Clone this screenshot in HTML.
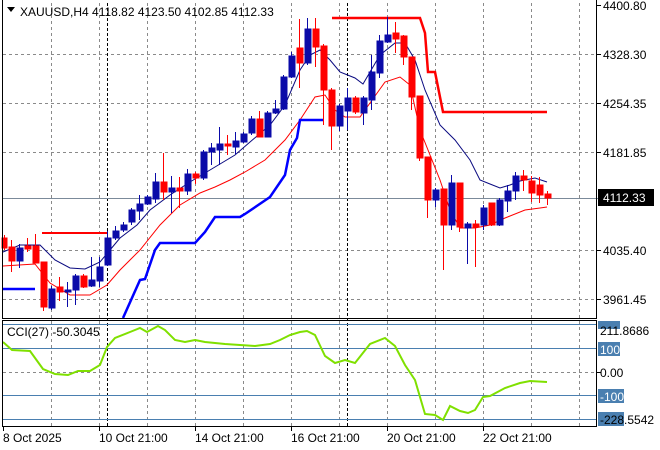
<!DOCTYPE html>
<html><head><meta charset="utf-8"><style>
html,body{margin:0;padding:0;background:#fff;width:660px;height:450px;overflow:hidden}
svg{display:block}
text{font-family:"Liberation Sans",sans-serif;font-size:12px;fill:#000}
</style></head><body>
<svg width="660" height="450" viewBox="0 0 660 450">
<rect width="660" height="450" fill="#fff"/>
<g stroke="#8a8a8a" stroke-width="1" stroke-dasharray="3,3" fill="none">
<path d="M3 54.5H596M3 103.5H596M3 152.5H596M3 250.5H596M3 299.5H596M3 372.5H596"/>
<path d="M51.5 3V426M99.5 3V426M147.5 3V426M195.5 3V426M243.5 3V426M291.5 3V426M339.5 3V426M387.5 3V426M435.5 3V426M483.5 3V426M531.5 3V426M579.5 3V426"/>
</g>
<path d="M107.5 3V426M347.5 3V426" stroke="#000" stroke-dasharray="3,2"/>
<path d="M3 198.5H598" stroke="#7b8a9a"/>
<g stroke="#4a7fb0"><path d="M3 324.5H596M3 348.5H596M3 395.5H596M3 419.5H596"/></g>
<polyline fill="none" stroke="#0a0a80" stroke-width="1" points="3,252 20,245 40,245 55,260 70,268 85,269 100,262 110,250 120,238 137,225 150,210 170,195 190,182 210,170 235,155 250,142 270,125 285,105 300,70 310,55 320,50 330,60 340,72 355,78 363,84 380,55 395,43 405,43 415,60 425,90 440,125 455,140 470,160 480,180 490,184 500,188 510,185 520,181 535,178 547,182"/>
<polyline fill="none" stroke="#ff0000" stroke-width="1" points="3,266 35,264 50,283 70,295 90,295 107,285 120,270 140,250 160,225 180,205 200,193 215,187 230,180 245,172 265,160 285,140 300,120 315,97 325,95 335,110 345,117 360,117 370,103 385,82 400,77 410,85 420,130 430,155 440,180 450,210 460,228 475,228 490,225 505,218 525,210 540,208 547,207"/>
<polyline fill="none" stroke="#0000ff" stroke-width="2.5" points="3,289 35,289"/>
<polyline fill="none" stroke="#0000ff" stroke-width="2.5" points="123,318 140,280 145,279 155,250 160,243 195,243 205,232 215,217 240,217 245,214 270,197 285,175 290,150 297,138 300,120 323,120"/>
<polyline fill="none" stroke="#ff0000" stroke-width="2" points="42,233 107,233"/>
<polyline fill="none" stroke="#ff0000" stroke-width="2.5" points="332,18 420,18 425,33 428,72 435,72 443,112 547,112"/>
<g stroke-width="1">
<g stroke="#ff0000" fill="#ff0000">
<path d="M4.5 235V250M11.5 240V272M27.5 238V252M35.5 234V263M43.5 262V311M59.5 277V301M83.5 274V288M163.5 153V200M179.5 177V208M195.5 172V184M227.5 135V155M259.5 111V137M299.5 19V88M315.5 18V67M323.5 44V125M331.5 88V150M355.5 96V114M395.5 22V53M403.5 35V65M411.5 57V110M419.5 96V161M427.5 157V218M443.5 189V270M459.5 183V232M475.5 220V267M491.5 203V226M523.5 170V191M531.5 176V202M539.5 177V203M547.5 191V205"/>
<rect x="2" y="238" width="5" height="10"/><rect x="9" y="247" width="6" height="14"/><rect x="25" y="246" width="6" height="3"/><rect x="33" y="246" width="6" height="17"/><rect x="41" y="262" width="6" height="45"/><rect x="57" y="287" width="6" height="5"/><rect x="81" y="276" width="6" height="11"/><rect x="161" y="182" width="6" height="10"/><rect x="177" y="188" width="6" height="3"/><rect x="193" y="174" width="6" height="4"/><rect x="225" y="144" width="6" height="2"/><rect x="257" y="119" width="6" height="18"/><rect x="297" y="48" width="6" height="15"/><rect x="313" y="29" width="6" height="18"/><rect x="321" y="46" width="6" height="44"/><rect x="329" y="90" width="6" height="36"/><rect x="353" y="98" width="6" height="14"/><rect x="393" y="33" width="6" height="6"/><rect x="401" y="36" width="6" height="21"/><rect x="409" y="57" width="6" height="40"/><rect x="417" y="96" width="6" height="62"/><rect x="425" y="157" width="6" height="43"/><rect x="441" y="189" width="6" height="36"/><rect x="457" y="183" width="6" height="44"/><rect x="473" y="224" width="6" height="3"/><rect x="489" y="203" width="6" height="22"/><rect x="521" y="176" width="6" height="4"/><rect x="529" y="181" width="6" height="12"/><rect x="537" y="185" width="6" height="10"/><rect x="545" y="194" width="6" height="4"/>
</g>
<g stroke="#0a0aa8" fill="#0a0aa8">
<path d="M19.5 244V268M51.5 286V310M67.5 282V307M75.5 274V305M91.5 257V287M99.5 257V287M107.5 231V266M115.5 226V240M123.5 222V232M131.5 208V225M139.5 195V220M147.5 195V205M155.5 173V203M171.5 176V213M187.5 169V195M203.5 150V180M211.5 143V165M219.5 127V165M235.5 132V154M243.5 132V143M251.5 116V135M267.5 111V137M275.5 100V114M283.5 75V110M291.5 52V78M307.5 18V65M339.5 104V131M347.5 88V130M363.5 96V125M371.5 55V110M379.5 35V78M387.5 17V43M435.5 188V207M451.5 175V230M467.5 222V264M483.5 205V230M499.5 198V226M507.5 185V212M515.5 172V200"/>
<rect x="17" y="248" width="6" height="13"/><rect x="49" y="289" width="6" height="19"/><rect x="65" y="290" width="6" height="2"/><rect x="73" y="276" width="6" height="14"/><rect x="89" y="280" width="6" height="6"/><rect x="97" y="267" width="6" height="14"/><rect x="105" y="238" width="6" height="27"/><rect x="113" y="231" width="6" height="7"/><rect x="121" y="225" width="6" height="5"/><rect x="129" y="210" width="6" height="12"/><rect x="137" y="204" width="6" height="7"/><rect x="145" y="197" width="6" height="7"/><rect x="153" y="182" width="6" height="17"/><rect x="169" y="188" width="6" height="4"/><rect x="185" y="174" width="6" height="17"/><rect x="201" y="152" width="6" height="26"/><rect x="209" y="148" width="6" height="4"/><rect x="217" y="144" width="6" height="6"/><rect x="233" y="141" width="6" height="6"/><rect x="241" y="134" width="6" height="8"/><rect x="249" y="119" width="6" height="14"/><rect x="265" y="113" width="6" height="24"/><rect x="273" y="109" width="6" height="4"/><rect x="281" y="77" width="6" height="32"/><rect x="289" y="56" width="6" height="21"/><rect x="305" y="29" width="6" height="34"/><rect x="337" y="106" width="6" height="20"/><rect x="345" y="98" width="6" height="13"/><rect x="361" y="98" width="6" height="15"/><rect x="369" y="72" width="6" height="28"/><rect x="377" y="41" width="6" height="32"/><rect x="385" y="35" width="6" height="7"/><rect x="433" y="190" width="6" height="10"/><rect x="449" y="183" width="6" height="42"/><rect x="465" y="224" width="6" height="4"/><rect x="481" y="208" width="6" height="17"/><rect x="497" y="200" width="6" height="25"/><rect x="505" y="191" width="6" height="10"/><rect x="513" y="176" width="6" height="15"/>
</g>
</g>
<polyline fill="none" stroke="#7fe000" stroke-width="2" points="3,342 12,350 30,351 43,369 55,374 68,375 78,371 90,371 100,365 107,347 115,338 130,332 140,328 147,332 158,326 165,330 175,340 185,342 195,340 205,342 225,344 240,345 255,346 270,344 280,340 290,335 300,332 307,331 315,335 325,356 335,363 345,360 355,363 370,344 385,338 395,346 405,365 415,380 425,414 435,415 443,420 450,406 460,411 468,413 475,410 483,397 490,396 505,388 520,383 530,381 547,382"/>
<g stroke="#000" fill="none">
<path d="M2.5 0V318.5H596.5V0"/>
<path d="M2.5 320.5H596.5V426.5H2.5Z"/>
</g>
<g stroke="#000"><path d="M597 5.5H601M597 54.5H601M597 103.5H601M597 152.5H601M597 250.5H601M597 299.5H601M597 372.5H601"/>
<path d="M3.5 427V431M99.5 427V431M195.5 427V431M291.5 427V431M387.5 427V431M483.5 427V431"/></g>
<text x="603" y="10">4400.80</text>
<text x="603" y="59">4328.30</text>
<text x="603" y="108">4254.35</text>
<text x="603" y="157">4181.85</text>
<text x="603" y="255">4035.40</text>
<text x="603" y="304">3961.45</text>
<rect x="598" y="189" width="56" height="17" fill="#000"/>
<text x="603" y="202" style="fill:#fff">4112.33</text>
<rect x="598" y="321" width="22" height="8" fill="#4a7fb0"/>
<text x="600" y="335">211.8686</text>
<rect x="598" y="342" width="22" height="14" fill="#4a7fb0"/>
<text x="600" y="354" style="fill:#fff">100</text>
<text x="600" y="377">0.00</text>
<rect x="598" y="389" width="26" height="14" fill="#4a7fb0"/>
<text x="600" y="401" style="fill:#fff">-100</text>
<rect x="598" y="412" width="26" height="14" fill="#4a7fb0"/>
<text x="600" y="424">-228.5542</text>
<path d="M7 7H15L11 12Z" fill="#000"/>
<text x="20" y="16">XAUUSD,H4  4118.82 4123.50 4102.85 4112.33</text>
<text x="7" y="336">CCI(27) -50.3045</text>
<text x="3" y="442">8 Oct 2025</text>
<text x="99" y="442">10 Oct 21:00</text>
<text x="195" y="442">14 Oct 21:00</text>
<text x="291" y="442">16 Oct 21:00</text>
<text x="387" y="442">20 Oct 21:00</text>
<text x="483" y="442">22 Oct 21:00</text>
</svg>
</body></html>
